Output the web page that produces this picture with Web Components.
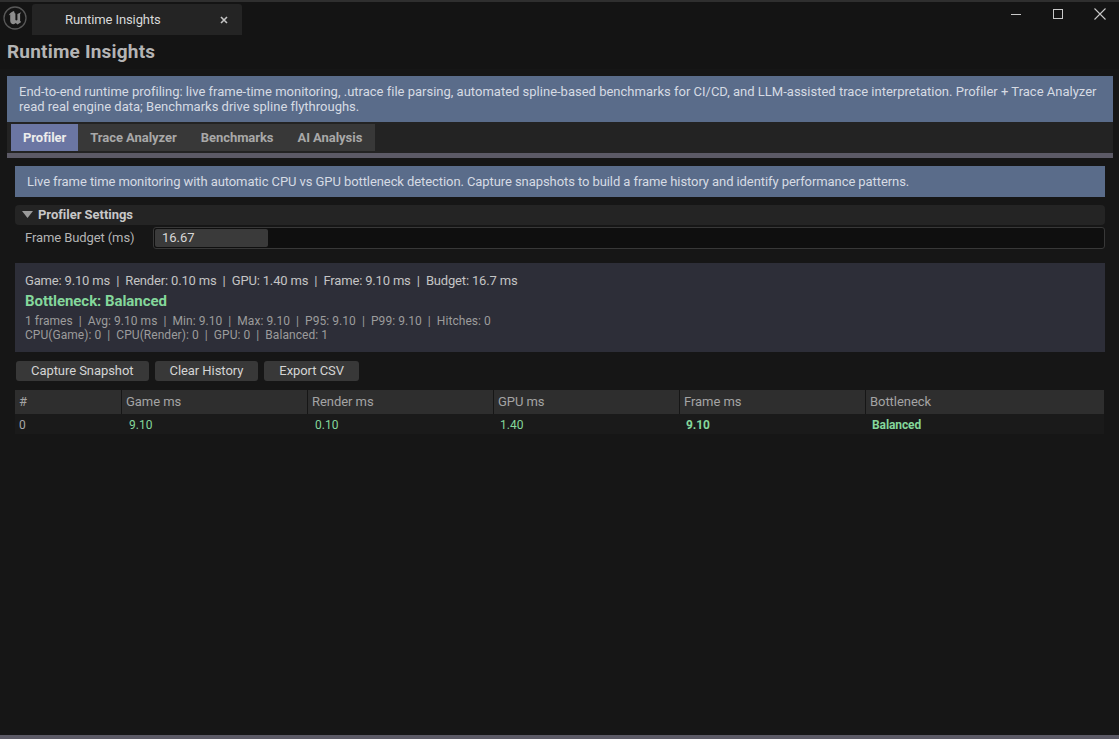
<!DOCTYPE html>
<html>
<head>
<meta charset="utf-8">
<title>Runtime Insights</title>
<style>
  html, body { margin: 0; height: 100%; background: #141414; overflow: hidden; }
  body { font-family: Roboto, "Liberation Sans", sans-serif; }
</style>
</head>
<body>
<ri-window>
  <ri-titlebar slot="titlebar" label="Runtime Insights"></ri-titlebar>
  <ri-banner variant="outer">End-to-end runtime profiling: live frame-time monitoring, .utrace file parsing, automated spline-based benchmarks for CI/CD, and LLM-assisted trace interpretation. Profiler + Trace Analyzer read real engine data; Benchmarks drive spline flythroughs.</ri-banner>
  <ri-tabs></ri-tabs>
  <ri-panel>
    <ri-banner variant="inner">Live frame time monitoring with automatic CPU vs GPU bottleneck detection. Capture snapshots to build a frame history and identify performance patterns.</ri-banner>
    <ri-settings></ri-settings>
    <ri-stats></ri-stats>
    <ri-actions></ri-actions>
    <ri-table></ri-table>
  </ri-panel>
</ri-window>

<script>
class RiWindow extends HTMLElement {
  constructor() {
    super();
    this.attachShadow({ mode: 'open' });
    this.shadowRoot.innerHTML = `
      <style>
        :host { display: flex; flex-direction: column; height: 739px; background: #141414; border-top: 2px solid #2f2f2f; box-sizing: border-box; }
        .title { height: 34px; padding-left: 7px; font-size: 19px; letter-spacing: 0.2px; font-weight: 700; line-height: 34px; color: #b4b4b4; flex: none; }
        .body { flex: 1; background: #161616; padding: 7px 6px 0 7px; display: flex; flex-direction: column; min-height: 0; }
        .foot { height: 4px; background: #5c5a66; flex: none; }
      </style>
      <slot name="titlebar"></slot>
      <div class="title">Runtime Insights</div>
      <div class="body"><slot></slot></div>
      <div class="foot"></div>
    `;
  }
}

class RiTitlebar extends HTMLElement {
  constructor() {
    super();
    this.attachShadow({ mode: 'open' });
    const label = this.getAttribute('label');
    this.shadowRoot.innerHTML = `
      <style>
        :host { display: flex; align-items: flex-start; height: 33px; flex: none; }
        .logo { width: 24px; height: 24px; margin: 4px 5px 0 3px; flex: none; }
        .tab { width: 210px; height: 31px; margin-top: 2px; background: #242424; border-radius: 3px 3px 0 0; display: flex; align-items: center; box-sizing: border-box; padding: 0 14px 0 33px; font-size: 13px; letter-spacing: -0.1px; color: #d8d8d8; }
        .tab span { flex: 1; }
        .tab svg { width: 8px; height: 8px; }
        .controls { margin-left: auto; display: flex; padding-top: 5px; }
        .controls svg { width: 42px; height: 14px; display: block; }
      </style>
      <svg class="logo" viewBox="0 0 24 24">
        <circle cx="12" cy="12" r="11" fill="#141414" stroke="#585858" stroke-width="1.3"/>
        <path d="M11 5C8.6 5.8 6.4 7.4 5.8 9.6l1.4-1v6.2c0 2.1 1.5 3.4 3.2 3.4 1 0 1.8-.4 2.4-1.1l1.7 1.5 3.7-2.7-1.1-1V8l1.2-1.8-3.9 1.8v6l-1 .6-1-.6V7.6l-.7-.4z" fill="#8e8e8e"/>
      </svg>
      <div class="tab"><span>${label}</span>
        <svg viewBox="0 0 8 8"><path d="M1 1l6 6M7 1L1 7" stroke="#c4c4c4" stroke-width="1.6" fill="none"/></svg>
      </div>
      <div class="controls">
        <svg viewBox="0 0 42 14"><path d="M16 7.5h10" stroke="#c8c8c8" stroke-width="1" fill="none"/></svg>
        <svg viewBox="0 0 42 14"><rect x="16.5" y="2.5" width="9" height="9" stroke="#c8c8c8" stroke-width="1" fill="none"/></svg>
        <svg viewBox="0 0 42 14" style="margin-right:-2px"><path d="M15.5 1.5l11 11M26.5 1.5l-11 11" stroke="#c8c8c8" stroke-width="1.1" fill="none"/></svg>
      </div>
    `;
  }
}

class RiBanner extends HTMLElement {
  constructor() {
    super();
    this.attachShadow({ mode: 'open' });
    this.shadowRoot.innerHTML = `
      <style>
        :host { display: block; background: #5a6c8a; color: #d6dbe4; font-size: 13px; line-height: 15px; flex: none; }
        :host([variant="outer"]) { padding: 8px 12px; letter-spacing: 0.003px; }
        :host([variant="inner"]) { padding: 8px 12px; letter-spacing: -0.08px; }
      </style>
      <slot></slot>
    `;
  }
}

class RiTabs extends HTMLElement {
  constructor() {
    super();
    this.attachShadow({ mode: 'open' });
    const tabs = ['Profiler', 'Trace Analyzer', 'Benchmarks', 'AI Analysis'];
    this.shadowRoot.innerHTML = `
      <style>
        :host { display: block; flex: none; background: #232323; padding-top: 2px; border-bottom: 5px solid #5c5a66; }
        .row { display: inline-flex; margin-left: 4px; background: #383838; height: 27px; margin-bottom: 2px; vertical-align: top; padding-right: 1px; }
        .t { padding: 0 12px; font-size: 13px; font-weight: 700; letter-spacing: -0.05px; line-height: 27px; color: #a8a8a8; }
        .t.on { background: #6b76a3; color: #ececec; }
      </style>
      <div class="row">${tabs.map((t, i) => `<div class="t${i === 0 ? ' on' : ''}">${t}</div>`).join('')}</div>
    `;
  }
}

class RiPanel extends HTMLElement {
  constructor() {
    super();
    this.attachShadow({ mode: 'open' });
    this.shadowRoot.innerHTML = `
      <style>
        :host { display: flex; flex-direction: column; padding: 8px 8px 0 8px; }
      </style>
      <slot></slot>
    `;
  }
}

class RiSettings extends HTMLElement {
  constructor() {
    super();
    this.attachShadow({ mode: 'open' });
    this.shadowRoot.innerHTML = `
      <style>
        :host { display: block; margin-top: 8px; flex: none; }
        .head { height: 20px; box-sizing: border-box; padding: 0 0 2px 7px; background: #242424; border-radius: 4px; display: flex; align-items: center; gap: 5px; font-size: 13px; font-weight: 700; letter-spacing: -0.03px; color: #c8c8c8; }
        .head svg { width: 11px; height: 7px; }
        .row { display: flex; align-items: flex-start; height: 22px; margin-top: 2px; padding-left: 10px; }
        label { width: 128px; font-size: 13px; letter-spacing: -0.1px; line-height: 20px; padding-top: 1px; color: #b4b4b4; flex: none; }
        .field { flex: 1; height: 22px; box-sizing: border-box; background: #0f0f0f; border: 1px solid #383838; border-radius: 3px; padding: 1px; display: flex; }
        .fill { width: 113px; background: #3a3a3a; border-radius: 2px; font-size: 13px; line-height: 17px; color: #d8d8d8; padding-left: 7px; box-sizing: border-box; }
      </style>
      <div class="head">
        <svg viewBox="0 0 11 7"><path d="M0 0h11L5.5 7z" fill="#9a9a9a"/></svg>
        Profiler Settings
      </div>
      <div class="row">
        <label>Frame Budget (ms)</label>
        <div class="field"><div class="fill">16.67</div></div>
      </div>
    `;
  }
}

class RiStats extends HTMLElement {
  constructor() {
    super();
    this.attachShadow({ mode: 'open' });
    this.shadowRoot.innerHTML = `
      <style>
        :host { display: block; margin-top: 14px; height: 89px; box-sizing: border-box; background: #2d2e38; padding: 10px 10px 0; flex: none; }
        .live { font-size: 13px; letter-spacing: -0.17px; line-height: 15px; color: #c4c4c4; white-space: pre; }
        .bn { font-size: 15px; font-weight: 700; letter-spacing: -0.05px; line-height: 18px; margin-top: 4px; color: #84d79b; }
        .sub { font-size: 12px; letter-spacing: 0.05px; line-height: 14px; margin-top: 4px; color: #9c9c9c; white-space: pre; }
      </style>
      <div class="live">Game: 9.10 ms  |  Render: 0.10 ms  |  GPU: 1.40 ms  |  Frame: 9.10 ms  |  Budget: 16.7 ms</div>
      <div class="bn">Bottleneck: Balanced</div>
      <div class="sub">1 frames  |  Avg: 9.10 ms  |  Min: 9.10  |  Max: 9.10  |  P95: 9.10  |  P99: 9.10  |  Hitches: 0
CPU(Game): 0  |  CPU(Render): 0  |  GPU: 0  |  Balanced: 1</div>
    `;
  }
}

class RiActions extends HTMLElement {
  constructor() {
    super();
    this.attachShadow({ mode: 'open' });
    const labels = ['Capture Snapshot', 'Clear History', 'Export CSV'];
    this.shadowRoot.innerHTML = `
      <style>
        :host { display: flex; gap: 6px; margin-top: 9px; padding-left: 1px; flex: none; }
        .b { height: 20px; padding: 0 15px; background: #383838; border-radius: 3px; font-size: 13px; letter-spacing: -0.06px; line-height: 20px; color: #d4d4d4; }
      </style>
      ${labels.map(l => `<div class="b">${l}</div>`).join('')}
    `;
  }
}

class RiTable extends HTMLElement {
  constructor() {
    super();
    this.attachShadow({ mode: 'open' });
    const heads = ['#', 'Game ms', 'Render ms', 'GPU ms', 'Frame ms', 'Bottleneck'];
    this.shadowRoot.innerHTML = `
      <style>
        :host { display: block; margin-top: 9px; flex: none; }
        .grid { display: grid; grid-template-columns: 106px 186px 186px 186px 186px 239px; }
        .h { height: 24px; background: #2e2e2e; border-left: 1px solid #161616; box-sizing: border-box; padding-left: 4px; font-size: 13px; letter-spacing: -0.05px; line-height: 23px; color: #a4a4a4; }
        .h:first-child { border-left: 0; padding-left: 4px; }
        .c { height: 20px; background: #1a1a1a; box-sizing: border-box; padding-left: 8px; font-size: 12px; line-height: 22px; color: #84d79b; }
        .idx { color: #a8a8a8; padding-left: 4px; }
        .tight { padding-left: 7px; }
        .strong { font-weight: 700; letter-spacing: -0.1px; padding-left: 7px; }
      </style>
      <div class="grid">
        ${heads.map(h => `<div class="h">${h}</div>`).join('')}
        <div class="c idx">0</div>
        <div class="c">9.10</div>
        <div class="c">0.10</div>
        <div class="c tight">1.40</div>
        <div class="c strong">9.10</div>
        <div class="c strong">Balanced</div>
      </div>
    `;
  }
}

customElements.define('ri-window', RiWindow);
customElements.define('ri-titlebar', RiTitlebar);
customElements.define('ri-banner', RiBanner);
customElements.define('ri-tabs', RiTabs);
customElements.define('ri-panel', RiPanel);
customElements.define('ri-settings', RiSettings);
customElements.define('ri-stats', RiStats);
customElements.define('ri-actions', RiActions);
customElements.define('ri-table', RiTable);
</script>
</body>
</html>
